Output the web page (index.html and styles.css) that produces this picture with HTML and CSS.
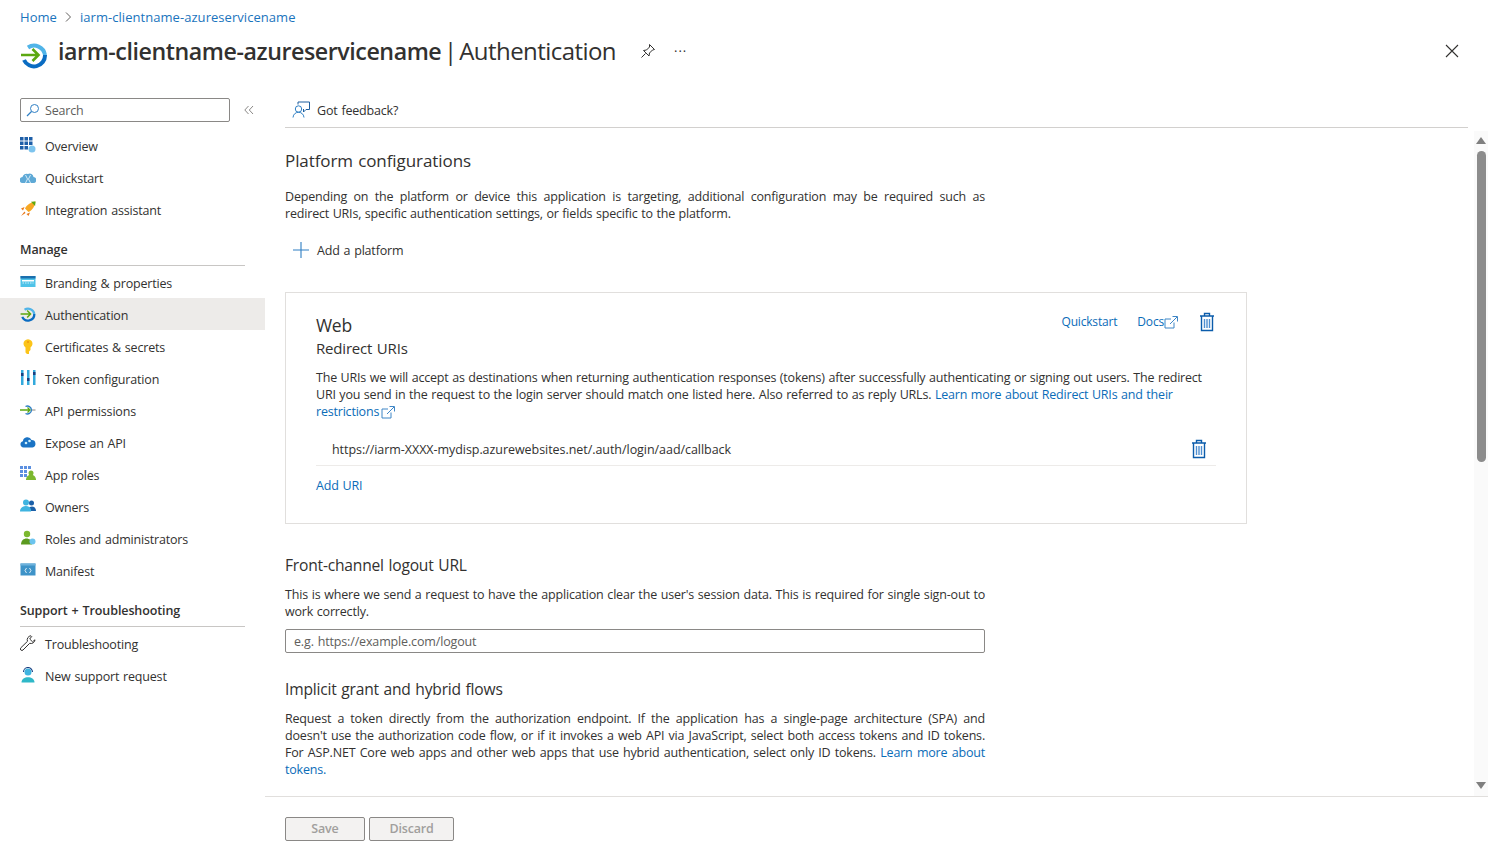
FILE: index.html
```html
<!DOCTYPE html>
<html lang="en">
<head>
    <meta charset="UTF-8">
    <meta name="viewport" content="width=device-width, initial-scale=1.0">
    <title>Authentication</title>
    <link rel="stylesheet" href="styles.css">
</head>
<body>
    <svg class="defs" width="0" height="0">
        <symbol id="trash" viewBox="0 0 16 20">
            <path d="M1 4h14M5.500 4V1.500h5V4M2.500 4v14.500h11V4" fill="none" stroke="#0b5cab" stroke-width="1.400"/>
            <path d="M5.500 7v9M8 7v9M10.500 7v9" fill="none" stroke="#4f8fd0" stroke-width="1.400"/>
        </symbol>
        <symbol id="external" viewBox="0 0 14 14">
            <path d="M10 7.500V13H1V4h6M6 9l7-7M8.500 1.500h5v5" fill="none" stroke="#3f86c6" stroke-width="1"/>
        </symbol>
        <symbol id="auth" viewBox="0 0 28 28">
            <path d="M8 6.500A11 11 0 0 1 25 14" fill="none" stroke="#50b4e8" stroke-width="4"/>
            <path d="M25 14A11 11 0 0 1 4 19" fill="none" stroke="#0a6cc2" stroke-width="4"/>
            <path d="M1 14h17M12.500 8l6 6-6 6" fill="none" stroke="#5ca811" stroke-width="2.600"/>
        </symbol>
    </svg>

    <header class="blade-header">
        <nav class="breadcrumb">
            <a href="#">Home</a>
            <svg class="crumb-sep" width="8" height="10" viewBox="0 0 8 10"><path d="M2 .5l4.500 4.500L2 9.500" fill="none" stroke="#605e5c"/></svg>
            <a href="#">iarm-clientname-azureservicename</a>
        </nav>
        <div class="title-row">
            <svg class="title-icon" width="28" height="28"><use href="#auth"/></svg>
            <h1><strong>iarm-clientname-azureservicename</strong> | Authentication</h1>
            <svg class="pin" width="16" height="16" viewBox="0 0 16 16">
                <path d="M9.500 1.500l5 5-2 .5-3 3-.5 3-5.500-5.500 3-.5 3-3zM5.500 10.500L1.500 14.500" fill="none" stroke="#323130"/>
            </svg>
            <span class="more">···</span>
            <svg class="close" width="14" height="14" viewBox="0 0 14 14"><path d="M1 1l12 12M13 1L1 13" stroke="#323130" stroke-width="1.100"/></svg>
        </div>
    </header>

    <div class="blade-body">
        <aside class="sidebar">
            <div class="search-row">
                <div class="search">
                    <svg width="14" height="14" viewBox="0 0 14 14"><circle cx="8.500" cy="5.500" r="4" fill="none" stroke="#2f7fc4"/><path d="M5.500 8.500L1 13" stroke="#2f7fc4" stroke-width="1.200"/></svg>
                    <span>Search</span>
                </div>
                <span class="collapse">
                    <svg width="10" height="10" viewBox="0 0 10 10"><path d="M4.500 1L.8 5l3.700 4M9 1L5.300 5 9 9" fill="none" stroke="#8a8886"/></svg>
                </span>
            </div>

            <a class="nav-item" href="#">
                <svg width="16" height="16" viewBox="0 0 16 16"><path d="M0 0h3.500v3.500H0zM4.500 0H8v3.500H4.500zM9 0h3.500v3.500H9zM0 4.500h3.500V8H0zM4.500 4.500H8V8H4.500zM9 4.500h3.500V8H9zM0 9h3.500v3.500H0zM4.500 9H8v3.500H4.500z" fill="#1e5fa8"/><circle cx="12" cy="12" r="3.500" fill="#7dc4ee"/></svg>
                Overview
            </a>
            <a class="nav-item" href="#">
                <svg width="16" height="16" viewBox="0 0 16 16"><path d="M3 14a3 3 0 0 1-.5-6A4 4 0 0 1 8 5a3.800 3.800 0 0 1 5.500 3A3 3 0 0 1 13 14z" fill="#5ea9d6"/><path d="M5.500 6l2 4-2 4M10.500 6l-2 4 2 4" fill="none" stroke="#d6ecf8"/></svg>
                Quickstart
            </a>
            <a class="nav-item" href="#">
                <svg width="16" height="16" viewBox="0 0 16 16"><path d="M5 7.500C7 3.500 11 1 15.500 .5 15 5 12.500 9 8.500 11z" fill="#f7a823"/><path d="M11 .8l4.500-.3-.4 4.500z" fill="#5ca811"/><path d="M4.500 6L1 7.500l2 2zM10 11.500L8.500 15l-2-2zM4.500 10.500L1 15l4.500-3z" fill="#e8791c"/></svg>
                Integration assistant
            </a>

            <h3 class="nav-heading">Manage</h3>
            <a class="nav-item" href="#">
                <svg width="16" height="16" viewBox="0 0 16 16"><path d="M.5 2h15v11H.5z" fill="#4fc3e8"/><path d="M.5 2h15v2.500H.5z" fill="#1b6fae"/><path d="M2 6h12v1.500H2z" fill="#fff"/><path d="M2.500 9h11" stroke="#cdeefa" stroke-dasharray="1.500 1"/></svg>
                Branding &amp; properties
            </a>
            <a class="nav-item active" href="#">
                <svg width="16" height="16"><use href="#auth"/></svg>
                Authentication
            </a>
            <a class="nav-item" href="#">
                <svg width="16" height="16" viewBox="0 0 16 16"><path d="M5.500 9.500a4.500 4.500 0 1 1 5 0V12L9 13.500V16H7l-1.500-1.500z" fill="#fcc419"/><circle cx="8" cy="4" r="1.100" fill="#f09a12"/></svg>
                Certificates &amp; secrets
            </a>
            <a class="nav-item" href="#">
                <svg width="16" height="16" viewBox="0 0 16 16"><path d="M1 0h2.500v15H1zM7 0h2.500v15H7zM13 0h2.500v15H13z" fill="#33a9dc"/><path d="M1 3h2.500v3H1zM7 8h2.500v3H7zM13 2h2.500v3H13z" fill="#1a3f80"/></svg>
                Token configuration
            </a>
            <a class="nav-item" href="#">
                <svg width="16" height="16" viewBox="0 0 16 16"><path d="M5.500 4.500A4 4 0 1 1 5.500 11.500" fill="none" stroke="#2f7fc4" stroke-width="1.400"/><path d="M0 8h10M7.500 5.500L10 8l-2.500 2.500" fill="none" stroke="#5ca811" stroke-width="1.300"/><path d="M12 8h3.500" stroke="#8a8886"/></svg>
                API permissions
            </a>
            <a class="nav-item" href="#">
                <svg width="16" height="16" viewBox="0 0 16 16"><path d="M3.500 13.500a3.200 3.200 0 0 1-.6-6.300A4.500 4.500 0 0 1 11.500 6a3.800 3.800 0 0 1 1 7.500z" fill="#1a73c4"/><circle cx="6" cy="9" r="1.300" fill="#cdeefa"/><circle cx="9.500" cy="7" r="1.300" fill="#cdeefa"/></svg>
                Expose an API
            </a>
            <a class="nav-item" href="#">
                <svg width="16" height="16" viewBox="0 0 16 16"><path d="M0 0h3v3H0zM4 0h3v3H4zM8 0h3v3H8zM0 4h3v3H0zM4 4h3v3H4zM0 8h3v3H0zM4 8h3v3H4z" fill="#5b8fe0"/><circle cx="11" cy="7" r="2.500" fill="#7cb82f"/><path d="M6 14c0-7 10-7 10 0z" fill="#7cb82f"/></svg>
                App roles
            </a>
            <a class="nav-item" href="#">
                <svg width="16" height="16" viewBox="0 0 16 16"><circle cx="11.500" cy="5" r="2.500" fill="#1a5fa8"/><path d="M8 13c0-6 8-6 8 0z" fill="#1a5fa8"/><circle cx="6" cy="4.500" r="3" fill="#3fb4e0"/><path d="M0 13.500c0-7.500 12-7.500 11 0z" fill="#3fb4e0"/></svg>
                Owners
            </a>
            <a class="nav-item" href="#">
                <svg width="16" height="16" viewBox="0 0 16 16"><circle cx="7" cy="4" r="3.200" fill="#7cb82f"/><path d="M1 14.500c0-8 11-8 11 0z" fill="#5b9a1f"/><circle cx="12.500" cy="11.500" r="3" fill="#6cc4ee"/></svg>
                Roles and administrators
            </a>
            <a class="nav-item" href="#">
                <svg width="16" height="16" viewBox="0 0 16 16"><path d="M.5 1.500h15v12H.5z" fill="#3e93c8"/><path d="M.5 1.500h15v2H.5z" fill="#6eb2dc"/><path d="M6.500 6L5 8.500l1.500 2.500M9.500 6L11 8.500 9.500 11" fill="none" stroke="#fff" stroke-width=".8"/></svg>
                Manifest
            </a>

            <h3 class="nav-heading">Support + Troubleshooting</h3>
            <a class="nav-item" href="#">
                <svg width="16" height="16" viewBox="0 0 16 16"><path d="M11 .8a4 4 0 0 0-3.500 5.500L.8 12.800a1.500 1.500 0 0 0 2.200 2.200l6.700-6.700A4 4 0 0 0 15 4.800l-2.500 2-2.800-2.800 2-2.500z" fill="none" stroke="#323130"/></svg>
                Troubleshooting
            </a>
            <a class="nav-item" href="#">
                <svg width="16" height="16" viewBox="0 0 16 16"><circle cx="8" cy="5" r="3.500" fill="#3fb4e0"/><path d="M3.500 5a4.500 4.500 0 0 1 9 0" fill="none" stroke="#1a3f80" stroke-width="1.100"/><path d="M1.500 15.500c0-7 13-7 13 0z" fill="#2fb8c8"/></svg>
                New support request
            </a>
        </aside>

        <main class="main">
            <div class="toolbar">
                <svg width="18" height="18" viewBox="0 0 18 18">
                    <circle cx="6.500" cy="8" r="3.200" fill="none" stroke="#2f7fc4"/>
                    <path d="M1 16.500c.5-7 10.500-7 11 0" fill="none" stroke="#2f7fc4"/>
                    <path d="M6 3.500V1h11.500v7.500H14L11.500 11V8" fill="none" stroke="#1f5f9f"/>
                </svg>
                <span>Got feedback?</span>
            </div>

            <div class="scroll-wrap">
                <div class="content">
                    <h2 class="page-title">Platform configurations</h2>
                    <p class="desc para-platform">Depending on the platform or device this application is targeting, additional configuration may be required such as redirect URIs, specific authentication settings, or fields specific to the platform.</p>
                    <a class="add-platform" href="#">
                        <svg width="16" height="16" viewBox="0 0 16 16"><path d="M8 0v16M0 8h16" stroke="#2f7fc4" stroke-width="1.100"/></svg>
                        Add a platform
                    </a>

                    <section class="card">
                        <div class="card-top">
                            <div>
                                <div class="card-title">Web</div>
                                <div class="card-sub">Redirect URIs</div>
                            </div>
                            <div class="card-actions">
                                <a href="#">Quickstart</a>
                                <a href="#">Docs<svg class="ext" width="14" height="14"><use href="#external"/></svg></a>
                                <svg class="trash-big" width="16" height="20"><use href="#trash"/></svg>
                            </div>
                        </div>
                        <p class="card-text">The URIs we will accept as destinations when returning authentication responses (tokens) after successfully authenticating or signing out users. The redirect URI you send in the request to the login server should match one listed here. Also referred to as reply URLs. <a href="#">Learn more about Redirect URIs and their restrictions<svg class="ext" width="14" height="14"><use href="#external"/></svg></a></p>
                        <div class="uri-row">
                            <span class="uri-text">https://iarm-XXXX-mydisp.azurewebsites.net/.auth/login/aad/callback</span>
                            <svg width="16" height="20"><use href="#trash"/></svg>
                        </div>
                        <a class="add-uri" href="#">Add URI</a>
                    </section>

                    <h2 class="section-title">Front-channel logout URL</h2>
                    <p class="desc">This is where we send a request to have the application clear the user's session data. This is required for single sign-out to work correctly.</p>
                    <input class="logout-input" type="text" placeholder="e.g. https://example.com/logout">

                    <h2 class="section-title implicit">Implicit grant and hybrid flows</h2>
                    <p class="desc">Request a token directly from the authorization endpoint. If the application has a single-page architecture (SPA) and doesn't use the authorization code flow, or if it invokes a web API via JavaScript, select both access tokens and ID tokens. For ASP.NET Core web apps and other web apps that use hybrid authentication, select only ID tokens. <a href="#">Learn more about tokens.</a></p>
                </div>

                <div class="scrollbar">
                    <span class="arrow-up"></span>
                    <span class="thumb"></span>
                    <span class="arrow-down"></span>
                </div>
            </div>

            <footer class="footer">
                <button class="btn btn-save" disabled>Save</button>
                <button class="btn btn-discard" disabled>Discard</button>
            </footer>
        </main>
    </div>
</body>
</html>
```

FILE: styles.css
```css
/* General Reset */
* {
    margin: 0;
    padding: 0;
    box-sizing: border-box;
}

html, body {
    height: 100%;
    overflow: hidden;
}

body {
    font-family: "Open Sans", "Noto Sans", sans-serif;
    font-size: 12.500px;
    letter-spacing: -0.180px;
    word-spacing: 0.800px;
    color: #323130;
    background: #fff;
    display: flex;
    flex-direction: column;
}

a {
    color: #0b6cb8;
    text-decoration: none;
}

.defs {
    display: none;
}

/* Header */
.blade-header {
    height: 92px;
    padding: 8px 29px 0 20px;
    flex-shrink: 0;
}

.breadcrumb {
    display: flex;
    align-items: center;
    gap: 7.500px;
    height: 18px;
    font-size: 13px;
    letter-spacing: 0.050px;
}

.breadcrumb a {
    color: #1a74bd;
}

.title-row {
    display: flex;
    align-items: center;
    height: 50px;
}

.title-icon {
    margin: 8px 10px 0 0;
}

.title-row h1 {
    font-size: 24px;
    font-weight: 400;
    letter-spacing: -0.560px;
    word-spacing: -3px;
    line-height: 32px;
}

.title-row h1 strong {
    font-size: 23.200px;
    font-weight: 600;
    letter-spacing: -0.430px;
}

.pin {
    margin-left: 24px;
}

.more {
    margin-left: 18px;
    font-size: 13px;
    letter-spacing: 1px;
}

.close {
    margin-left: auto;
}

/* Layout */
.blade-body {
    flex: 1;
    display: flex;
    min-height: 0;
}

/* Sidebar */
.sidebar {
    width: 265px;
    flex-shrink: 0;
}

.search-row {
    display: flex;
    align-items: flex-start;
    height: 37px;
    padding: 6px 0 0 20px;
}

.search {
    width: 210px;
    height: 24px;
    border: 1px solid #8a8886;
    border-radius: 2px;
    display: flex;
    align-items: center;
    gap: 5px;
    padding-left: 5px;
    color: #605e5c;
}

.collapse {
    margin: 7px 0 0 14px;
    display: flex;
}

.nav-item {
    display: flex;
    align-items: center;
    height: 32px;
    padding: 2px 0 0 20px;
    gap: 9px;
    color: #323130;
}

.nav-item svg {
    flex-shrink: 0;
    margin-top: -2px;
}

.nav-item.active {
    background: #edebe9;
}

.nav-heading {
    font-size: 12.500px;
    font-weight: 600;
    letter-spacing: -0.100px;
    margin: 15px 20px 0;
    height: 26px;
    line-height: 19px;
    border-bottom: 1px solid #c8c6c4;
}

/* Main pane */
.main {
    flex: 1;
    min-width: 0;
    display: flex;
    flex-direction: column;
}

.toolbar {
    height: 36px;
    margin: 0 20px;
    padding: 1px 0 0 7px;
    border-bottom: 1px solid #d2d0ce;
    display: flex;
    align-items: center;
    gap: 7px;
}

.scroll-wrap {
    flex: 1;
    min-height: 0;
    display: flex;
    overflow: hidden;
}

.content {
    flex: 1;
    min-width: 0;
    padding: 22px 0 0 20px;
}

.content h2 {
    font-size: 15.600px;
    font-weight: 400;
    letter-spacing: -0.200px;
    line-height: 22px;
}

.content .page-title {
    font-size: 17px;
    letter-spacing: -0.080px;
}

.desc {
    width: 700px;
    line-height: 17px;
    text-align: justify;
    word-spacing: 0.500px;
}

.para-platform {
    margin-top: 16px;
}

.add-platform {
    display: flex;
    align-items: center;
    gap: 8px;
    height: 32px;
    margin: 12px 0 26px 8px;
    color: #323130;
}

/* Web card */
.card {
    width: 962px;
    height: 232px;
    border: 1px solid #e1dfdd;
    padding: 20px 30px;
}

.card-top {
    display: flex;
    justify-content: space-between;
    align-items: flex-start;
}

.card-title {
    font-size: 17.500px;
    letter-spacing: -0.300px;
    line-height: 24px;
}

.card-sub {
    font-size: 15px;
    line-height: 22px;
}

.card-actions {
    display: flex;
    align-items: center;
    gap: 20px;
    height: 20px;
    margin: -2px 1px 0 0;
    font-size: 12px;
}

.card-actions .ext {
    margin-left: 0;
}

.card-actions .trash-big {
    margin: 2px 0 0 1px;
}

.ext {
    margin-left: 2px;
    vertical-align: -3px;
}

.card-text {
    margin-top: 10px;
    line-height: 17px;
    letter-spacing: -0.200px;
    word-spacing: 0.600px;
}

.uri-row {
    display: flex;
    justify-content: space-between;
    align-items: center;
    height: 35px;
    margin-top: 11px;
    padding: 2px 9px 0 16px;
    border-bottom: 1px solid #edebe9;
}

.uri-text {
    letter-spacing: -0.050px;
}

.add-uri {
    display: block;
    margin-top: 11px;
}

.section-title {
    margin-top: 30px;
}

.section-title + .desc {
    margin-top: 10px;
}

.logout-input {
    display: block;
    width: 700px;
    height: 24px;
    margin-top: 9px;
    padding-left: 8px;
    border: 1px solid #8a8886;
    border-radius: 2px;
    font: inherit;
    letter-spacing: -0.150px;
    word-spacing: inherit;
    outline: none;
}

.logout-input::placeholder {
    color: #605e5c;
}

.section-title.implicit {
    margin-top: 25px;
}

/* Fake scrollbar */
.scrollbar {
    width: 14px;
    margin-top: 3px;
    background: #fafafa;
    display: flex;
    flex-direction: column;
    align-items: center;
    padding-top: 6px;
    flex-shrink: 0;
}

.arrow-up {
    border: 5px solid transparent;
    border-top: 0;
    border-bottom: 7px solid #7f7f7f;
}

.thumb {
    width: 9px;
    height: 311px;
    margin-top: 7px;
    background: #8c8c8c;
    border-radius: 5px;
}

.arrow-down {
    margin-top: auto;
    margin-bottom: 7px;
    border: 5px solid transparent;
    border-bottom: 0;
    border-top: 7px solid #7f7f7f;
}

/* Footer */
.footer {
    height: 65px;
    flex-shrink: 0;
    border-top: 1px solid #e1dfdd;
    display: flex;
    gap: 4px;
    padding: 20px 0 0 20px;
}

.btn {
    height: 24px;
    padding-bottom: 2px;
    border: 1px solid #8a8886;
    border-radius: 2px;
    background: #f3f2f1;
    color: #a19f9d;
    font: inherit;
    font-weight: 600;
    letter-spacing: inherit;
}

.btn-save {
    width: 80px;
}

.btn-discard {
    width: 85px;
}
```
